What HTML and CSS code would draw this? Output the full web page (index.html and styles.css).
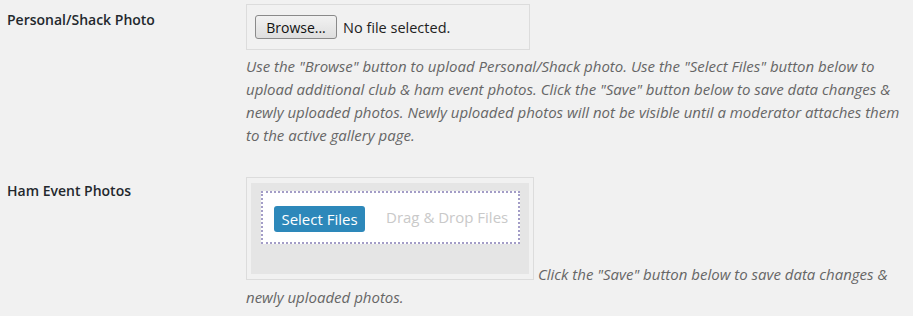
FILE: index.html
```html
<!DOCTYPE html>
<html lang="en">
<head>
    <meta charset="UTF-8">
    <title>Photos</title>
    <link rel="stylesheet" href="styles.css">
</head>
<body>
    <div class="form-table">
        <div class="row">
            <div class="label">Personal/Shack Photo</div>
            <div class="field">
                <div class="file-box">
                    <button class="browse">Browse...</button>
                    <span class="file-name">No file selected.</span>
                </div>
                <p class="description">Use the "Browse" button to upload Personal/Shack photo. Use the "Select Files" button below to upload additional club &amp; ham event photos. Click the "Save" button below to save data changes &amp; newly uploaded photos. Newly uploaded photos will not be visible until a moderator attaches them to the active gallery page.</p>
            </div>
        </div>
        <div class="row row-gallery">
            <div class="label">Ham Event Photos</div>
            <div class="field">
                <p class="description"><span class="uploader"><span class="uploader-inner"><span class="drop-area"><button class="select-files">Select Files</button><span class="drop-text">Drag &amp; Drop Files</span></span></span></span> Click the "Save" button below to save data changes &amp; newly uploaded photos.</p>
            </div>
        </div>
    </div>
</body>
</html>
```

FILE: styles.css
```css
body {
    margin: 0;
    background: #f1f1f1;
    color: #23282d;
    font-family: 'Open Sans', sans-serif;
    font-size: 14px;
}
.form-table {
    padding: 4px 0 0 7px;
}
.row {
    display: flex;
}
.row-gallery {
    margin-top: 30px;
}
.label {
    width: 239px;
    flex-shrink: 0;
    font-weight: 600;
    font-size: 14px;
    padding-top: 6px;
}
.row-gallery .label {
    padding-top: 4px;
}
.field {
    width: 662px;
}
.file-box {
    width: 274px;
    height: 44px;
    border: 1px solid #dcdcdc;
    display: flex;
    align-items: center;
    padding-left: 8px;
    box-sizing: content-box;
}
.browse {
    font-family: 'Open Sans', sans-serif;
    font-size: 14px;
    color: #111;
    height: 24px;
    width: 82px;
    padding: 0;
    border: 1px solid #8a8a8a;
    border-radius: 3px;
    background: linear-gradient(#f2f2f2, #dedede);
}
.file-name {
    margin-left: 6px;
    font-size: 14.5px;
    color: #222;
}
.description {
    margin: 5px 0 0 0;
    font-style: italic;
    font-size: 15px;
    line-height: 23px;
    color: #666;
}
.row-gallery .description {
    margin-top: 0;
}
.uploader {
    display: inline-block;
    overflow: hidden;
    border: 1px solid #dcdcdc;
    padding: 5px 4px 5px 4px;
    width: 278px;
    height: 91px;
    box-sizing: content-box;
    font-style: normal;
}
.uploader-inner {
    display: block;
    background: #e5e5e5;
    height: 91px;
    padding: 8px 9px 0 10px;
    box-sizing: border-box;
}
.drop-area {
    display: flex;
    align-items: center;
    height: 53px;
    box-sizing: border-box;
    background: #fff;
    border: 2px dotted #a39dc7;
    padding-left: 11px;
}
.select-files {
    font-family: 'Open Sans', sans-serif;
    font-size: 15px;
    color: #fff;
    background: #2d88ba;
    border: none;
    border-radius: 3px;
    width: 91px;
    height: 26px;
    padding: 0;
    margin-top: 2px;
}
.drop-text {
    margin-left: 21px;
    font-size: 15px;
    color: #c9c9c9;
    line-height: 1;
}
```
